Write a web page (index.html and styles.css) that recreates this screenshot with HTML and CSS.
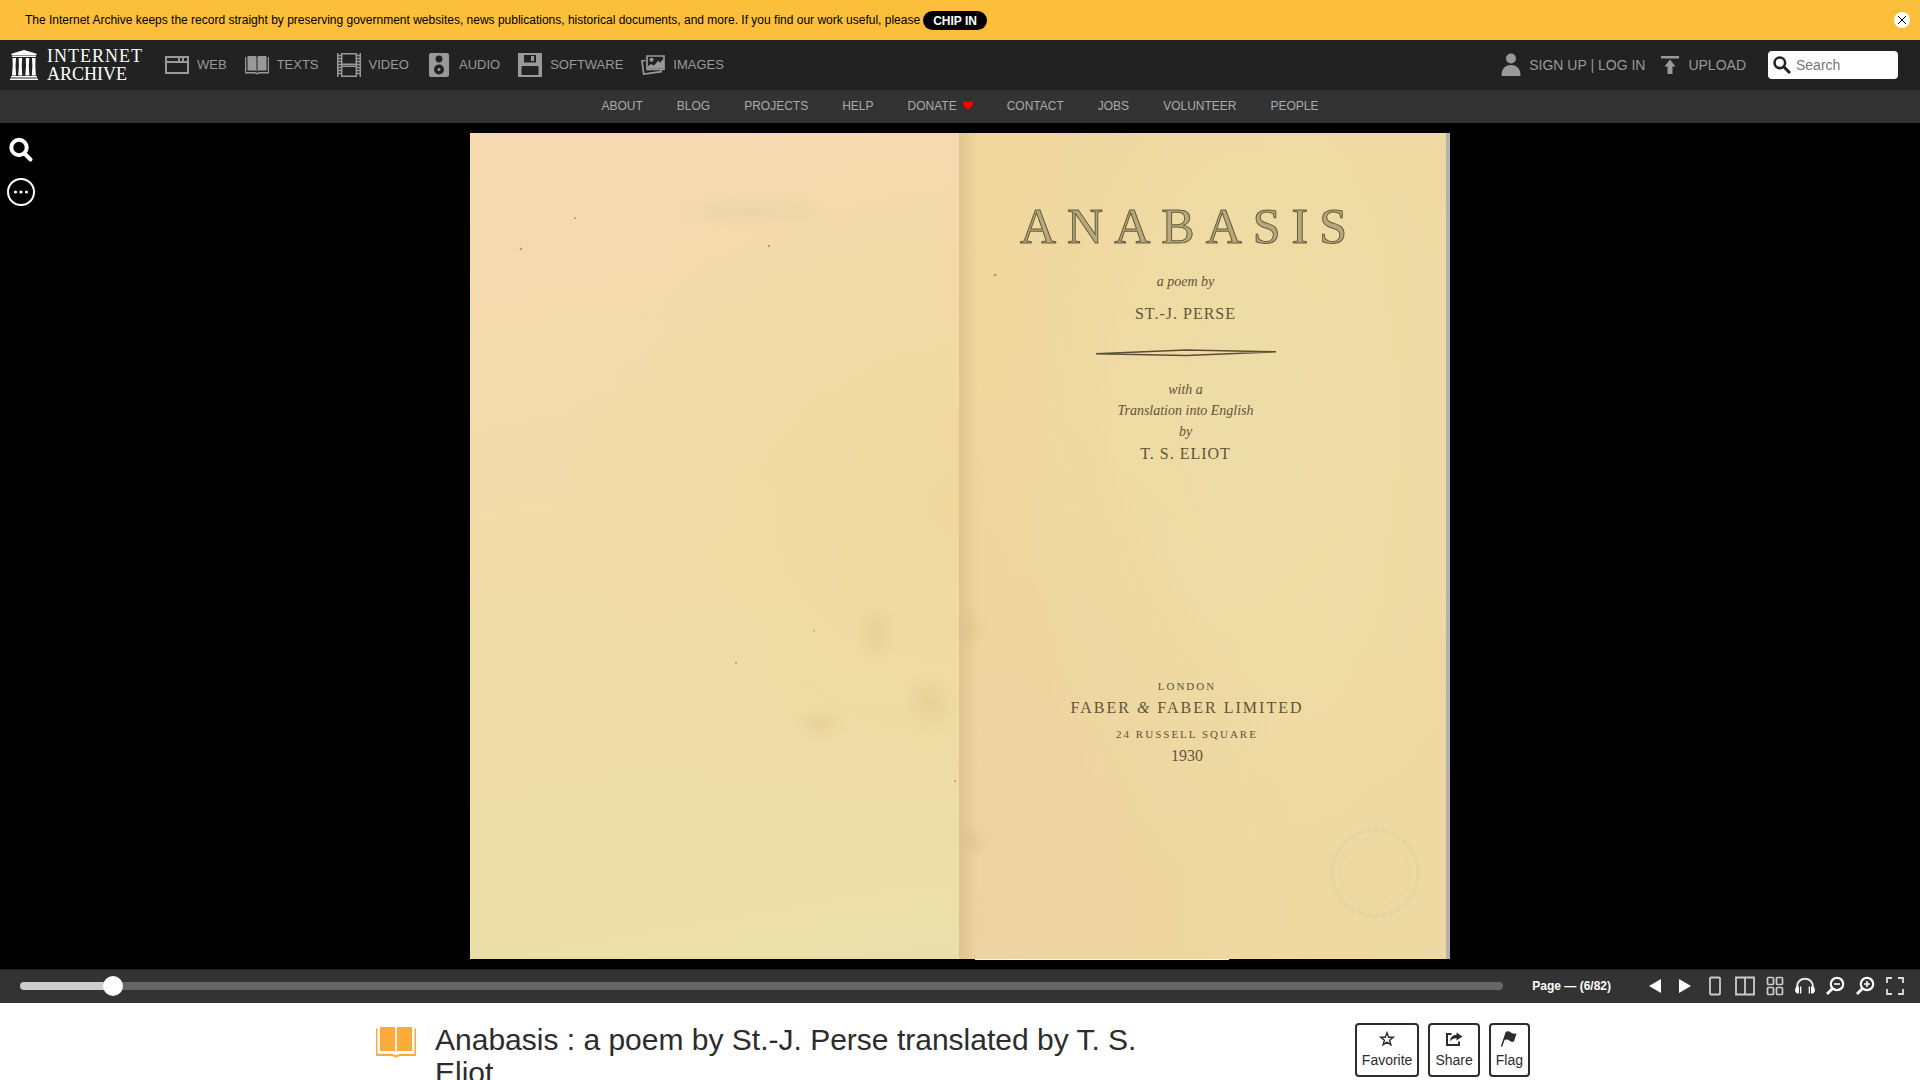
FILE: index.html
```
<!DOCTYPE html>
<html lang="en">
<head>
<meta charset="utf-8">
<meta name="viewport" content="width=device-width, initial-scale=1">
<title>Anabasis : Internet Archive</title>
<link rel="stylesheet" href="styles.css">
</head>
<body>
<aside class="banner">
  <p class="banner-text">The Internet Archive keeps the record straight by preserving government websites, news publications, historical documents, and more. If you find our work useful, please</p>
  <a class="chip-in" href="#donate">CHIP IN</a>
  <button class="banner-close" type="button" aria-label="Close"><svg width="16" height="16" viewBox="0 0 16 16"><circle cx="8" cy="8" r="8" fill="#fff"/><path d="M4 4l8 8M12 4l-8 8" stroke="#000" fill="none"/></svg></button>
</aside>

<header>
  <nav class="topnav" aria-label="Main">
    <a class="logo" href="#home" aria-label="Internet Archive">
      <svg width="28" height="30" viewBox="0 0 28 30" fill="#fff"><path d="M14 0L26 3.500l1 1.500H1l1-1.500zM2 5.500h24V7H2zM1 26h26v1.500H1zM0 28.500h28V30H0zM2.500 8h3.500l-.5 8 .6 9.500H2l.7-9.500zM8.700 8h3.500l-.5 8 .6 9.500H8.200l.7-9.500zM15.800 8h3.500l-.5 8 .6 9.500h-4.100l.7-9.500zM22 8h3.500l-.2 8 .6 9.500h-4.100l.6-9.500z"/></svg>
      <span class="wordmark"><span class="wordmark-top">INTERNET</span><span>ARCHIVE</span></span>
    </a>
    <div class="media">
      <a href="#web"><svg width="24" height="24" viewBox="0 0 24 24" fill="none" stroke="#999" stroke-width="2"><path d="M1 4h22v16H1zM1 9h22M14 4v4M18 4v4"/></svg>WEB</a>
      <a href="#texts"><svg width="24" height="24" viewBox="0 0 24 24" fill="#999"><path d="M2.500 3H10q1.500 0 1.500 1v14.500q-.5-1-2-1h-7zM21.500 3H14q-1.500 0-1.500 1v14.500q.5-1 2-1h7zM0 4h1.200v15H10l2 .8 2-.8h8.800V4H24v16.500h-9.500l-2.500.9-2.500-.9H0z"/></svg>TEXTS</a>
      <a href="#video"><svg width="24" height="24" viewBox="0 0 24 24" fill="none" stroke="#999" stroke-width="1.500"><path d="M.7 0v24M23.300 0v24M4.700 0v24M19.300 0v24M4 .8h16M4 11.300h16M4 13.300h16M4 23.200h16M1 2.500h3M1 5.500h3M1 8.500h3M1 11.500h3M1 14.500h3M1 17.500h3M1 20.500h3M20 2.500h3M20 5.500h3M20 8.500h3M20 11.500h3M20 14.500h3M20 17.500h3M20 20.500h3"/></svg>VIDEO</a>
      <a href="#audio"><svg width="24" height="24" viewBox="0 0 24 24"><rect x="2" width="20" height="24" rx="2" fill="#999"/><g fill="#222"><circle cx="12" cy="6" r="3.400"/><circle cx="12" cy="16.500" r="5"/></g><circle cx="12" cy="16.500" r="1.500" fill="#999"/></svg>AUDIO</a>
      <a href="#software"><svg width="24" height="24" viewBox="0 0 24 24"><path fill="#999" fill-rule="evenodd" d="M0 0h24v24H0zM6 2v7.500h12V2zM3.500 14v8h17v-8q0-1-1-1h-15q-1 0-1 1zM13 3h3v5h-3z"/></svg>SOFTWARE</a>
      <a href="#images"><svg width="24" height="24" viewBox="0 0 24 24"><path fill="none" stroke="#999" stroke-width="1.700" d="M6 3h17v13.500H6zM4.500 7.500L1 8l1.700 13L20 18.700l-.2-1.500"/><circle cx="10.500" cy="6.800" r="2" fill="#999"/><path fill="#999" d="M7 15.800v-2.500l3-2.300 3 1.500 4.500-5 1.500 2.500 2.500-3.500 1.500 2v7.300z"/></svg>IMAGES</a>
    </div>
    <div class="account">
      <a class="login" href="#login"><svg width="20" height="24" viewBox="0 0 20 24" fill="#999"><circle cx="10" cy="5.500" r="5"/><path d="M.5 23c0-7 3-11 9.500-11s9.500 4 9.500 11z"/></svg>SIGN UP | LOG IN</a>
      <a class="upload" href="#upload"><svg width="18" height="20" viewBox="0 0 18 20" fill="#999"><path d="M0 1h18v2.500H0zM9 4.500l5.500 7h-3V19h-5v-7.500h-3z"/></svg>UPLOAD</a>
      <label class="search"><svg width="18" height="18" viewBox="0 0 18 18" fill="none" stroke="#222" stroke-width="2.600"><circle cx="6.800" cy="6.800" r="5.300"/><path stroke-width="3" d="M10.800 10.800L17 17"/></svg><input type="search" placeholder="Search" aria-label="Search the Archive"></label>
    </div>
  </nav>
  <nav class="subnav" aria-label="About">
    <a href="#about">ABOUT</a><a href="#blog">BLOG</a><a href="#projects">PROJECTS</a><a href="#help">HELP</a><a href="#donate">DONATE<svg width="10" height="9" viewBox="0 0 10 9"><path fill="red" d="M5 9L1 5C-1 2.500.5.300 2.500.300 4 .300 5 1.500 5 1.500S6 .300 7.500.300C9.500.300 11 2.500 9 5z"/></svg></a><a href="#contact">CONTACT</a><a href="#jobs">JOBS</a><a href="#volunteer">VOLUNTEER</a><a href="#people">PEOPLE</a>
  </nav>
</header>

<main>
  <section class="reader" aria-label="Book reader">
    <div class="reader-tools">
      <button type="button" aria-label="Search inside"><svg width="28" height="28" viewBox="0 0 28 28" fill="none" stroke="#fff"><circle cx="12" cy="11.500" r="7.700" stroke-width="4"/><path d="M17.500 17.500l6 6" stroke-width="4" stroke-linecap="round"/></svg></button>
      <button type="button" aria-label="More"><svg width="28" height="28" viewBox="0 0 28 28" fill="#fff"><circle cx="14" cy="14" r="13" fill="none" stroke="#fff" stroke-width="2"/><circle cx="8.500" cy="14" r="1.600"/><circle cx="14" cy="14" r="1.600"/><circle cx="19.500" cy="14" r="1.600"/></svg></button>
    </div>
    <div class="book">
      <div class="page page-left"></div>
      <article class="page page-right">
        <h2 class="cover-title">ANABASIS</h2>
        <p class="italic byline">a poem by</p>
        <p class="name">ST.-J. PERSE</p>
        <svg class="swelled-rule" width="180" height="8" viewBox="0 0 180 8"><path d="M0 4.800L90 1 180 2.800 90 6.500z" fill="none" stroke="#5a5030" stroke-width="1.400"/></svg>
        <p class="italic">with a</p>
        <p class="italic">Translation into English</p>
        <p class="italic">by</p>
        <p class="name translator">T. S. ELIOT</p>
        <p class="small-caps imprint">LONDON</p>
        <p class="name publisher">FABER <i>&amp;</i> FABER LIMITED</p>
        <p class="small-caps address">24 RUSSELL SQUARE</p>
        <p class="year">1930</p>
      </article>
      <svg class="foxing" viewBox="0 0 980 827" preserveAspectRatio="none" aria-hidden="true">
        <defs>
          <radialGradient id="stain"><stop offset="0" stop-color="#c99f60" stop-opacity=".16"/><stop offset="1" stop-color="#c99f60" stop-opacity="0"/></radialGradient>
          <radialGradient id="bleed"><stop offset="0" stop-color="#cfc79a" stop-opacity=".25"/><stop offset="1" stop-color="#cfc79a" stop-opacity="0"/></radialGradient>
        </defs>
        <g fill="#a8793d" opacity=".7"><circle cx="51" cy="116" r="1.200"/><circle cx="105" cy="85" r="1"/><circle cx="299" cy="113" r="1.200"/><circle cx="266" cy="530" r="1"/><circle cx="344" cy="498" r=".8"/><circle cx="525" cy="142" r="1.200"/><circle cx="485" cy="648" r="1"/></g>
        <g fill="url(#stain)"><ellipse cx="406" cy="500" rx="22" ry="30"/><ellipse cx="350" cy="590" rx="26" ry="16"/><ellipse cx="460" cy="570" rx="28" ry="30"/><ellipse cx="502" cy="495" rx="15" ry="24"/><ellipse cx="504" cy="708" rx="18" ry="16"/></g>
        <ellipse cx="280" cy="78" rx="80" ry="18" fill="url(#bleed)"/>
        <g fill="none" stroke="#cfcf9f" opacity=".3"><circle cx="905" cy="740" r="43" stroke-width="4" stroke-dasharray="6 2"/><circle cx="905" cy="740" r="35"/></g>
        <path d="M505 826.500h254" stroke="#fff8cf"/>
      </svg>
    </div>
  </section>

  <div class="controls">
    <input class="scrubber" type="range" min="0" max="100" step="0.1" value="5.7" aria-label="Page position">
    <span class="page-number">Page — (6/82)</span>
    <div class="control-buttons">
      <button type="button" aria-label="Previous page"><svg width="20" height="20" viewBox="0 0 20 20"><path fill="#fff" d="M4 10L16 3v14z"/></svg></button>
      <button type="button" aria-label="Next page"><svg width="20" height="20" viewBox="0 0 20 20"><path fill="#fff" d="M16 10L4 3v14z"/></svg></button>
      <button type="button" aria-label="One-page view"><svg width="20" height="20" viewBox="0 0 20 20"><rect x="5" y="1.500" width="10" height="17" rx="1" fill="none" stroke="#ccc" stroke-width="1.800"/></svg></button>
      <button type="button" aria-label="Two-page view"><svg width="20" height="20" viewBox="0 0 20 20"><path d="M1 1.500h18v17H1zM10 1.500v17" fill="none" stroke="#ccc" stroke-width="1.800"/></svg></button>
      <button type="button" aria-label="Thumbnail view"><svg width="20" height="20" viewBox="0 0 20 20" fill="none" stroke="#ccc" stroke-width="1.700"><rect x="2.500" y="1.500" width="6" height="7" rx="1"/><rect x="11.500" y="1.500" width="6" height="7" rx="1"/><rect x="2.500" y="11.500" width="6" height="7" rx="1"/><rect x="11.500" y="11.500" width="6" height="7" rx="1"/></svg></button>
      <button type="button" aria-label="Read aloud"><svg width="20" height="20" viewBox="0 0 20 20"><path d="M2 15v-4C2 0 18 0 18 11v4" fill="none" stroke="#e8e8e8" stroke-width="2"/><path fill="#fff" d="M4 10.500v7H2q-2-1-2-3.500t2-3.500zM16 10.500v7h2q2-1 2-3.500t-2-3.500zM5 10.500h1.300v7H5zM13.700 10.500H15v7h-1.300z"/></svg></button>
      <button type="button" aria-label="Zoom out"><svg width="20" height="20" viewBox="0 0 20 20" fill="none" stroke="#fff" stroke-width="2.200"><circle cx="12" cy="8" r="6.200"/><path d="M9 8h6" stroke-width="1.600"/><path d="M7.500 12.500L2 18" stroke-width="2.800"/></svg></button>
      <button type="button" aria-label="Zoom in"><svg width="20" height="20" viewBox="0 0 20 20" fill="none" stroke="#fff" stroke-width="2.200"><circle cx="12" cy="8" r="6.200"/><path d="M9 8h6M12 5v6" stroke-width="1.600"/><path d="M7.500 12.500L2 18" stroke-width="2.800"/></svg></button>
      <button type="button" aria-label="Fullscreen"><svg width="20" height="20" viewBox="0 0 20 20"><path d="M2 7V2h5M13 2h5v5M18 13v5h-5M7 18H2v-5" fill="none" stroke="#ddd" stroke-width="1.800"/></svg></button>
    </div>
  </div>

  <section class="details">
    <svg class="details-icon" width="40" height="32" viewBox="0 0 40 32" fill="#fbaa3c"><path d="M4 1h14q1.200 0 1.200 1v24q-.8-1-2-1H4zM36 1H22q-1.200 0-1.200 1v24q.8-1 2-1H36zM0 2.500h1.500v25.300H16l4 1.500 4-1.500h14.500V2.500H40v27.500H24.500L20 31.500 15.500 30H0z"/></svg>
    <h1 class="title">Anabasis : a poem by St.-J. Perse translated by T. S. Eliot</h1>
    <div class="actions">
      <button type="button"><svg width="16" height="16" viewBox="0 0 16 16"><path d="M8 1.800l1.700 4.500h4.500l-3.600 2.900 1.300 4.700L8 11.200l-3.900 2.700 1.300-4.700-3.600-2.900h4.500z" fill="none" stroke="#2c2c2c" stroke-width="1.400"/></svg>Favorite</button>
      <button type="button"><svg width="18" height="16" viewBox="0 0 18 16"><path d="M6.500 3H2v11h12v-3.500" fill="none" stroke="#2c2c2c" stroke-width="2"/><path d="M11.500 1.500L17.500 5.500l-6 4V7.300Q7.500 7 5 10.500 5.500 4 11.500 3.800z" fill="#2c2c2c"/></svg>Share</button>
      <button type="button"><svg width="18" height="16" viewBox="0 0 18 16"><path d="M6.500 1l-5 14.500" stroke="#2c2c2c" stroke-width="1.500"/><path d="M6.500.500q2.500-1 4 .8t6 1.200L14 10.500q-3 1-4.500-.8T4 9z" fill="#2c2c2c"/></svg>Flag</button>
    </div>
  </section>
</main>
</body>
</html>
```
FILE: styles.css
```
* { box-sizing: border-box; }
body {
  margin: 0;
  height: 100vh;
  overflow: hidden;
  background: #fff;
  color: #2c2c2c;
  font: 14px/20px "Liberation Sans", Arial, sans-serif;
}
a { color: inherit; text-decoration: none; }
p, h1, h2 { margin: 0; font-weight: normal; }
svg { display: block; flex: none; }
button {
  padding: 0;
  border: 0;
  background: none;
  color: inherit;
  font: inherit;
  cursor: pointer;
}

/* Donation banner */
.banner {
  display: flex;
  align-items: center;
  gap: 3px;
  height: 40px;
  padding: 0 10px 0 25px;
  background: #fbbf3b;
  color: #000;
  font-size: 12px;
}
.chip-in {
  padding: 1px 10px 0;
  border-radius: 10px;
  background: #000;
  color: #fff;
  font-weight: bold;
  line-height: 18px;
}
.banner-close { margin-left: auto; }

/* Site navigation */
.topnav {
  display: flex;
  align-items: center;
  height: 50px;
  padding: 0 22px 0 10px;
  background: #222;
  color: #999;
  font-size: 13px;
}
.logo {
  display: flex;
  align-items: center;
  gap: 9px;
  width: 155px;
  color: #fff;
}
.wordmark {
  display: flex;
  flex-direction: column;
  font: 18px/18px "Liberation Serif", serif;
}
.wordmark-top { letter-spacing: 1px; }
.media { display: flex; gap: 18px; }
.media a { display: flex; align-items: center; gap: 8px; }
.account {
  display: flex;
  align-items: center;
  margin-left: auto;
  font-size: 14px;
}
.login, .upload { display: flex; align-items: center; gap: 9px; }
.login { gap: 8px; }
.upload { margin: 0 22px 0 16px; }
.search {
  display: flex;
  align-items: center;
  gap: 5px;
  width: 130px;
  height: 28px;
  padding: 0 5px;
  border-radius: 4px;
  background: #fff;
}
.search input {
  flex: 1;
  min-width: 0;
  padding: 0;
  border: 0;
  outline: 0;
  background: none;
  color: #222;
  font: inherit;
}
.search input::placeholder { color: #777; }
.subnav {
  display: flex;
  justify-content: center;
  align-items: center;
  gap: 34px;
  height: 33px;
  padding-bottom: 2px;
  background: #333;
  color: #aaa;
  font-size: 12px;
}
.subnav a { display: flex; align-items: center; gap: 6px; }

/* Book reader */
.reader {
  position: relative;
  padding: 10px 0 9px;
  background: #000;
}
.reader-tools {
  position: absolute;
  top: 13px;
  left: 7px;
  display: flex;
  flex-direction: column;
  gap: 14px;
}
.book {
  position: relative;
  display: grid;
  grid-template-columns: 489fr 491fr;
  max-width: 980px;
  min-height: 827px;
  margin: 0 auto;
  padding-bottom: 1px;
}
.page-left {
  background:
    radial-gradient(ellipse at 100% 45%, #efd99f, transparent 60%),
    linear-gradient(170deg, #f6d9b1 0%, #f2dbaa 35%, #eedca7 65%, #eadfaa 100%);
}
.page-right {
  display: flex;
  flex-direction: column;
  align-items: center;
  padding: 64px 34px 0 0;
  border-right: 4px solid #b5b1ae;
  background:
    linear-gradient(90deg, rgba(190, 155, 105, 0.3), transparent 4%),
    radial-gradient(ellipse at 0% 100%, #edd3a3, transparent 50%),
    radial-gradient(ellipse at 60% 35%, #eedda7, transparent 65%),
    linear-gradient(90deg, #f0d79d, #eed9a2);
  color: #5f5538;
  font: 16px/20px "Liberation Serif", serif;
}
.cover-title {
  padding-left: 7px;
  color: #b7a97b;
  font-size: 50px;
  line-height: 58px;
  letter-spacing: 11px;
  -webkit-text-stroke: 1px #665c3d;
}
.italic { font-size: 14px; line-height: 21px; font-style: italic; }
.byline { margin-top: 16px; }
.name { letter-spacing: 1px; }
.byline + .name { margin-top: 12px; }
.swelled-rule { margin: 25px 0 22px; }
.translator { margin-top: 2px; }
.small-caps { font-size: 11px; letter-spacing: 2px; }
.imprint { margin-top: 212px; padding-left: 3px; }
.publisher { margin-top: 2px; padding-left: 3px; letter-spacing: 2px; }
.address { margin-top: 6px; padding-left: 3px; }
.year { margin-top: 2px; padding-left: 3px; }
.foxing {
  position: absolute;
  inset: 0;
  width: 100%;
  height: 100%;
  pointer-events: none;
}

/* Reader controls */
.controls {
  display: flex;
  align-items: center;
  gap: 29px;
  height: 34px;
  padding: 0 10px 2px 20px;
  border-top: 1px solid #222;
  background: #333;
  color: #fff;
  font-size: 12px;
  font-weight: bold;
}
.scrubber {
  flex: 1;
  height: 8px;
  margin: 0;
  border-radius: 4px;
  appearance: none;
  background: linear-gradient(90deg, #ccc 6%, #666 6%);
}
.scrubber::-webkit-slider-thumb {
  width: 20px;
  height: 20px;
  border-radius: 50%;
  appearance: none;
  background: #fff;
}
.control-buttons { display: flex; }
.control-buttons button {
  display: flex;
  justify-content: center;
  width: 30px;
}

/* Item details */
.details {
  display: flex;
  align-items: flex-start;
  max-width: 1170px;
  margin: 0 auto;
  padding: 20px 15px 20px 0;
}
.details-icon { margin: 3px 19px 0 1px; }
.title {
  max-width: 740px;
  font-size: 30px;
  line-height: 33px;
}
.actions { display: flex; gap: 9px; margin-left: auto; }
.actions button {
  display: flex;
  flex-direction: column;
  align-items: center;
  gap: 3px;
  padding: 6px 5px 5px;
  border: 2px solid #2c2c2c;
  border-radius: 4px;
}
```
